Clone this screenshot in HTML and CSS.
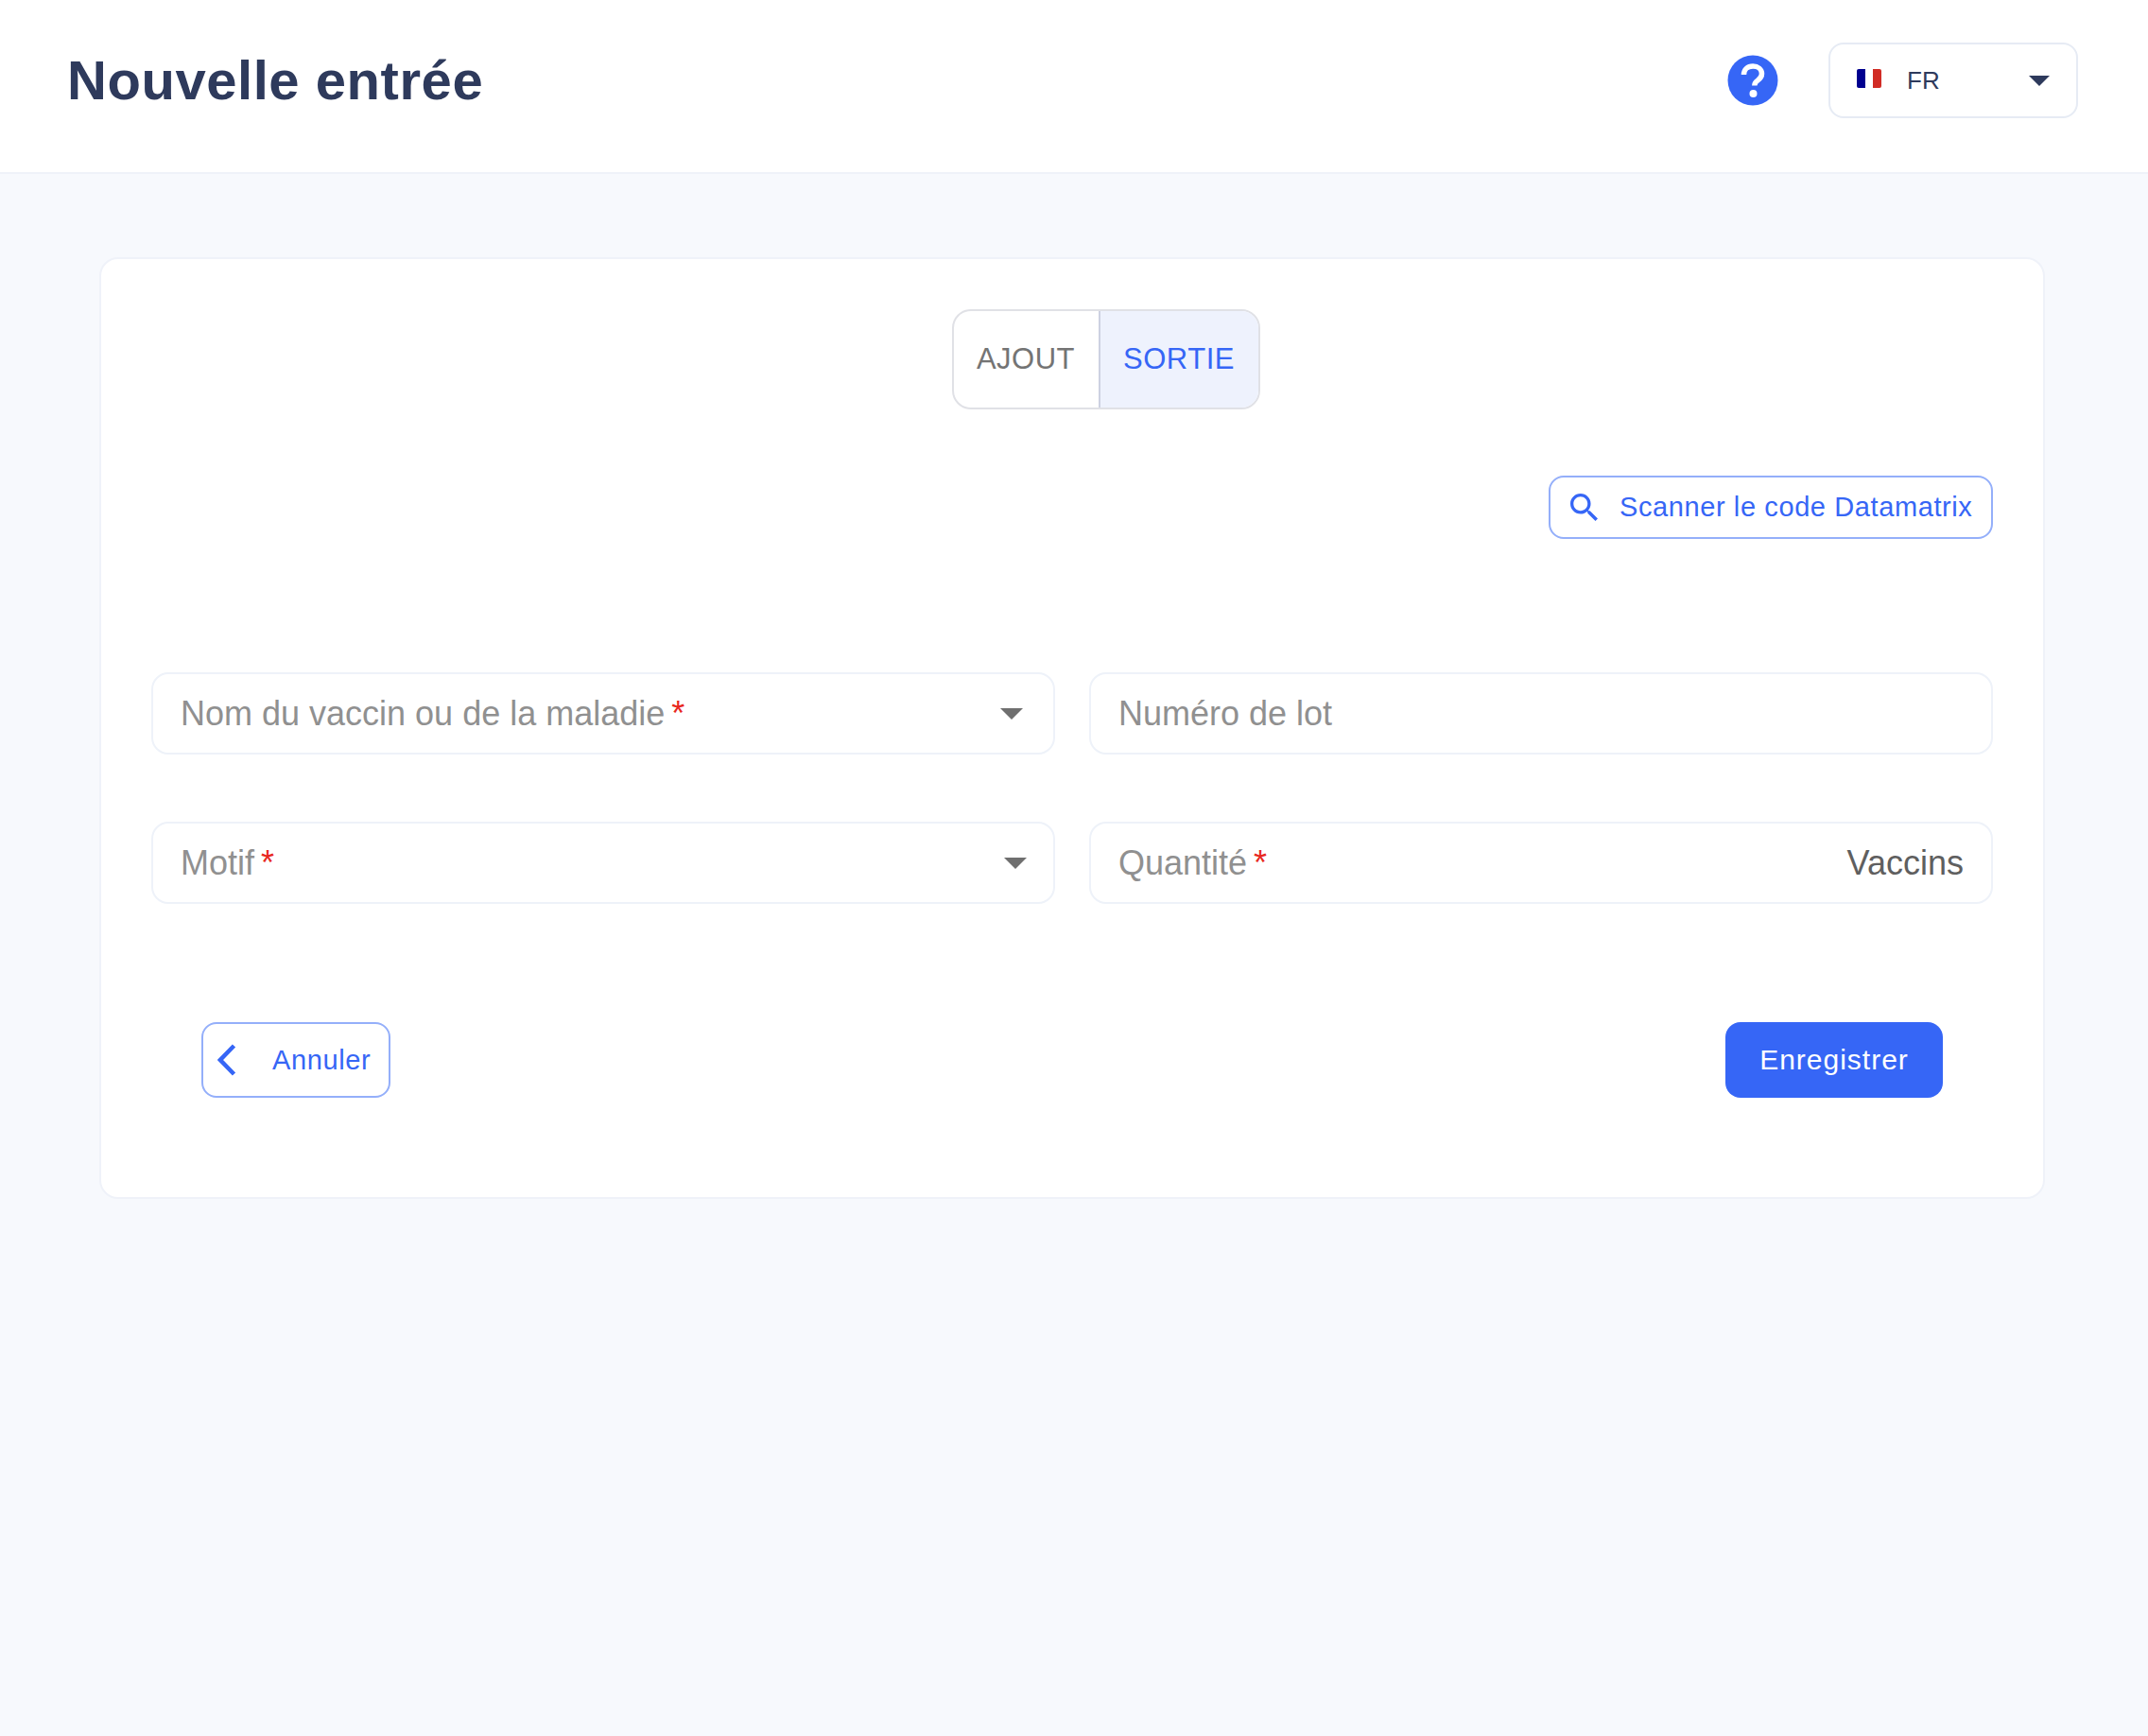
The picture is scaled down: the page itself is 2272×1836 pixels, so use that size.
FILE: index.html
```html
<!DOCTYPE html>
<html lang="fr">
<head>
  <meta charset="UTF-8">
  <title>Nouvelle entrée</title>
  <link rel="stylesheet" href="styles.css">
</head>
<body>

<header class="topbar">
  <h1>Nouvelle entrée</h1>
  <div class="topbar-right">
    <svg class="help-icon" viewBox="0 0 54 54">
      <circle cx="27" cy="27" r="26.500" fill="#3666f6"/>
      <path d="M17.500 21c0-5.500 4-9 9.600-9 5.400 0 9.400 3.300 9.400 8 0 3.300-1.600 5.100-4.300 7-2.400 1.600-3.400 2.800-3.400 5.500" fill="none" stroke="#fff" stroke-width="5.500"/>
      <circle cx="27.500" cy="41" r="4" fill="#fff"/>
    </svg>
    <div class="lang-select">
      <span class="flag"><i class="flag-blue"></i><i class="flag-white"></i><i class="flag-red"></i></span>
      <span class="lang-code">FR</span>
      <span class="arrow arrow-dark"></span>
    </div>
  </div>
</header>

<main class="content">
  <div class="card">
    <div class="toggle-row">
      <div class="toggle">
        <span class="toggle-item">AJOUT</span>
        <span class="toggle-item active">SORTIE</span>
      </div>
    </div>

    <div class="scan-row">
      <button class="btn btn-outline btn-scan">
        <svg viewBox="3 3 17.500 17.500"><path d="M15.500 14h-.79l-.28-.27C15.410 12.590 16 11.110 16 9.500 16 5.910 13.090 3 9.500 3S3 5.910 3 9.500 5.910 16 9.500 16c1.610 0 3.090-.59 4.230-1.570l.27.28v.79l5 4.990L20.490 19l-4.990-5zm-6 0C7.010 14 5 11.990 5 9.500S7.010 5 9.500 5 14 7.010 14 9.500 11.990 14 9.500 14z" fill="#3666f6"/></svg>
        Scanner le code Datamatrix
      </button>
    </div>

    <div class="form-grid">
      <div class="field field-select">
        <span class="placeholder">Nom du vaccin ou de la maladie<em>*</em></span>
        <span class="arrow"></span>
      </div>
      <div class="field">
        <span class="placeholder">Numéro de lot</span>
      </div>
      <div class="field field-select field-select-wide">
        <span class="placeholder">Motif<em>*</em></span>
        <span class="arrow"></span>
      </div>
      <div class="field">
        <span class="placeholder">Quantité<em>*</em></span>
        <span class="unit">Vaccins</span>
      </div>
    </div>

    <div class="actions">
      <button class="btn btn-outline btn-cancel">
        <svg viewBox="0 0 20 34"><path d="M17.500 2 3 17l14.500 15" fill="none" stroke="#3666f6" stroke-width="4.500"/></svg>
        Annuler
      </button>
      <button class="btn btn-primary">Enregistrer</button>
    </div>
  </div>
</main>

</body>
</html>
```

FILE: styles.css
```css
* {
  box-sizing: border-box;
}

html, body {
  height: 100%;
}

body {
  margin: 0;
  font-family: "Liberation Sans", Arial, sans-serif;
  background: #f7f9fd;
  color: #2e3a5c;
}

/* Top bar */
.topbar {
  height: 184px;
  background: #fff;
  border-bottom: 2px solid #eff2f9;
  display: flex;
  align-items: center;
  justify-content: space-between;
  padding: 0 80px 12px 71px;
}

.topbar h1 {
  margin: 0;
  font-size: 58px;
  line-height: 1;
  font-weight: 700;
  letter-spacing: 0.55px;
  color: #2e3a5c;
}

.topbar-right {
  display: flex;
  align-items: center;
  gap: 53px;
  margin-right: -6px;
}

.help-icon {
  width: 54px;
  height: 54px;
  display: block;
}

.lang-select {
  width: 264px;
  height: 80px;
  background: #fff;
  border: 2px solid #e6ebf4;
  border-radius: 16px;
  display: flex;
  align-items: center;
  padding: 0 28px 0 28px;
}

.flag {
  display: flex;
  width: 26px;
  height: 20px;
  margin-right: 27px;
  margin-top: -4px;
}

.flag i {
  flex: 1;
}

.flag-blue {
  background: #00008f;
  border-radius: 2px 0 0 2px;
}

.flag-white {
  background: #fff;
}

.flag-red {
  background: #d12c25;
  border-radius: 0 2px 2px 0;
}

.lang-code {
  font-size: 26px;
  flex: 1;
}

.arrow {
  width: 0;
  height: 0;
  border-left: 12px solid transparent;
  border-right: 12px solid transparent;
  border-top: 12px solid #6f6f6f;
}

.arrow-dark {
  border-left-width: 11px;
  border-right-width: 11px;
  border-top: 11px solid #2e3a5c;
}

/* Card */
.content {
  padding: 88px 109px 0 105px;
}

.card {
  background: #fff;
  border: 2px solid #eff2f9;
  border-radius: 20px;
  height: 996px;
  padding: 53px 53px 0;
}

.toggle-row {
  display: flex;
  justify-content: center;
  padding-left: 71px;
}

.toggle {
  display: flex;
  height: 106px;
  width: 326px;
  border: 2px solid #e0e1e6;
  border-radius: 20px;
  overflow: hidden;
}

.toggle-item {
  display: flex;
  align-items: center;
  justify-content: center;
  font-size: 31px;
  letter-spacing: 0.5px;
  color: #747474;
}

.toggle-item:first-child {
  width: 153px;
}

.toggle-item.active {
  flex: 1;
  background: #eef2fd;
  color: #3666f6;
  border-left: 2px solid #cdd1e2;
}

.scan-row {
  display: flex;
  justify-content: flex-end;
  margin-top: 70px;
}

.btn {
  font-family: inherit;
  display: flex;
  align-items: center;
  cursor: pointer;
}

.btn-outline {
  background: #fff;
  color: #3666f6;
  border: 2px solid #94afFa;
  border-radius: 16px;
}

.btn-scan {
  width: 470px;
  height: 67px;
  padding: 0 0 0 21px;
  font-size: 29px;
  letter-spacing: 0.6px;
}

.btn-scan svg {
  width: 29px;
  height: 29px;
  margin-right: 23px;
}

.form-grid {
  display: grid;
  grid-template-columns: 956px 956px;
  column-gap: 36px;
  row-gap: 71px;
  margin-top: 141px;
}

.field {
  height: 87px;
  background: #fff;
  border: 2px solid #eef2f9;
  border-radius: 18px;
  display: flex;
  align-items: center;
  justify-content: space-between;
  padding: 0 29px;
  font-size: 36px;
}

.field-select {
  padding-right: 32px;
}

.field-select-wide {
  padding-right: 28px;
}

.placeholder {
  color: #909090;
}

.placeholder em {
  font-style: normal;
  color: #e8281e;
  margin-left: 7px;
}

.unit {
  color: #5f5f5f;
}

.actions {
  display: flex;
  justify-content: space-between;
  margin-top: 125px;
  padding: 0 53px;
}

.btn-cancel {
  width: 200px;
  height: 80px;
  padding: 0 0 0 15px;
  font-size: 29px;
  letter-spacing: 0.6px;
}

.btn-cancel svg {
  width: 20px;
  height: 34px;
  margin-right: 38px;
}

.btn-primary {
  width: 230px;
  height: 80px;
  justify-content: center;
  background: #3666f6;
  color: #fff;
  border: 0;
  border-radius: 16px;
  font-size: 30px;
  letter-spacing: 1px;
}
```
